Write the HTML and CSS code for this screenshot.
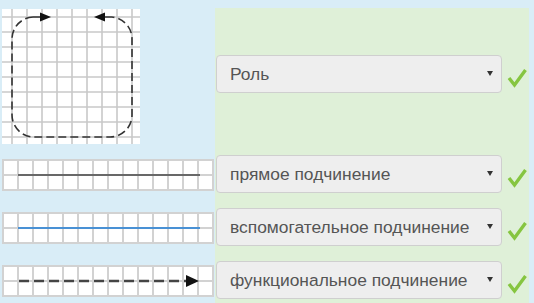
FILE: index.html
```html
<!DOCTYPE html>
<html lang="ru">
<head>
<meta charset="utf-8">
<link rel="stylesheet" href="styles.css">
</head>
<body>
<div class="board">
  <div class="pic pic-first">
    <svg class="square" width="138" height="135" viewBox="0 0 138 135">
      <rect x="0" y="0" width="138" height="135" fill="#fff"/>
      <g stroke="#c9c9c9" stroke-width="1.6">
        <path d="M10 0V135M25 0V135M40 0V135M55 0V135M70 0V135M85 0V135M100 0V135M115 0V135M130 0V135"/>
        <path d="M0 8H138M0 23H138M0 38H138M0 53H138M0 68H138M0 83H138M0 98H138M0 113H138M0 128H138"/>
      </g>
      <path d="M31 8 A22 22 0 0 0 10 30 V106 A22 22 0 0 0 32 128 H108 A22 22 0 0 0 130 106 V30 A22 22 0 0 0 110 8" fill="none" stroke="#333" stroke-width="1.6" stroke-dasharray="8 4"/>
      <path d="M31 8 H40 M101 8 H110" stroke="#333" stroke-width="1.6"/>
      <polygon points="38,3.5 49,8 38,12.5" fill="#111"/>
      <polygon points="103,3.5 92,8 103,12.5" fill="#111"/>
    </svg>
  </div>
  <div class="ans ans-first">
    <div class="select"><span>Роль</span><i class="caret"></i></div>
    <svg class="check" width="20" height="20" viewBox="0 0 20 20"><path d="M2 10 L7.5 17 L18.5 2" fill="none" stroke="#86c540" stroke-width="3.4"/></svg>
  </div>

  <div class="pic pic-row">
    <svg class="strip" width="212" height="32" viewBox="0 0 212 32">
      <rect width="212" height="32" fill="#fff"/>
      <path class="grid" d="M1 0V32M16 0V32M31 0V32M46 0V32M61 0V32M76 0V32M91 0V32M106 0V32M121 0V32M136 0V32M151 0V32M166 0V32M181 0V32M196 0V32M211 0V32M0 1H212M0 16H212M0 31H212"/>
      <path d="M16 16H198" stroke="#444" stroke-width="1.6"/>
    </svg>
  </div>
  <div class="ans">
    <div class="select"><span>прямое подчинение</span><i class="caret"></i></div>
    <svg class="check" width="20" height="20" viewBox="0 0 20 20"><path d="M2 10 L7.5 17 L18.5 2" fill="none" stroke="#86c540" stroke-width="3.4"/></svg>
  </div>

  <div class="pic pic-row">
    <svg class="strip" width="212" height="32" viewBox="0 0 212 32">
      <rect width="212" height="32" fill="#fff"/>
      <path class="grid" d="M1 0V32M16 0V32M31 0V32M46 0V32M61 0V32M76 0V32M91 0V32M106 0V32M121 0V32M136 0V32M151 0V32M166 0V32M181 0V32M196 0V32M211 0V32M0 1H212M0 16H212M0 31H212"/>
      <path d="M16 16H198" stroke="#1b7bd6" stroke-width="1.6"/>
    </svg>
  </div>
  <div class="ans">
    <div class="select"><span>вспомогательное подчинение</span><i class="caret"></i></div>
    <svg class="check" width="20" height="20" viewBox="0 0 20 20"><path d="M2 10 L7.5 17 L18.5 2" fill="none" stroke="#86c540" stroke-width="3.4"/></svg>
  </div>

  <div class="pic pic-row">
    <svg class="strip" width="212" height="32" viewBox="0 0 212 32">
      <rect width="212" height="32" fill="#fff"/>
      <path class="grid" d="M1 0V32M16 0V32M31 0V32M46 0V32M61 0V32M76 0V32M91 0V32M106 0V32M121 0V32M136 0V32M151 0V32M166 0V32M181 0V32M196 0V32M211 0V32M0 1H212M0 16H212M0 31H212"/>
      <path d="M17 16H186" stroke="#444" stroke-width="2.6" stroke-dasharray="10 5"/>
      <polygon points="184,10 197,16 184,22" fill="#111"/>
    </svg>
  </div>
  <div class="ans">
    <div class="select"><span>функциональное подчинение</span><i class="caret"></i></div>
    <svg class="check" width="20" height="20" viewBox="0 0 20 20"><path d="M2 10 L7.5 17 L18.5 2" fill="none" stroke="#86c540" stroke-width="3.4"/></svg>
  </div>
</div>
</body>
</html>
```

FILE: styles.css
```css
html, body {
  margin: 0;
  padding: 0;
  background: #d9edf7;
  font-family: "Liberation Sans", Arial, sans-serif;
  overflow: hidden;
}

.board {
  display: grid;
  grid-template-columns: 215px 314px;
  grid-template-rows: 144px 53px 53px 53px;
  margin-top: 8px;
}

.pic {
  padding-left: 2px;
}

.pic svg {
  display: block;
}

.pic-first {
  padding-top: 1px;
}

.pic-row {
  padding-top: 7px;
}

.grid {
  stroke: #d2d2d2;
  stroke-width: 2;
  fill: none;
}

.ans {
  background: #dff0d8;
  display: flex;
  align-items: flex-start;
  padding-top: 3px;
  padding-left: 1px;
}

.ans-first {
  padding-top: 47px;
}

.select {
  box-sizing: border-box;
  width: 286px;
  height: 38px;
  background: #eeeeee;
  border: 1px solid #cfcfcf;
  border-radius: 4px;
  display: flex;
  align-items: center;
  justify-content: space-between;
  padding: 0 8px 0 13px;
  color: #555;
  font-size: 17.4px;
}

.caret {
  width: 0;
  height: 0;
  border-left: 3px solid transparent;
  border-right: 3px solid transparent;
  border-top: 5px solid #333;
  margin-top: -1px;
}

.check {
  display: block;
  margin-left: 5px;
  margin-top: 13px;
}
```
